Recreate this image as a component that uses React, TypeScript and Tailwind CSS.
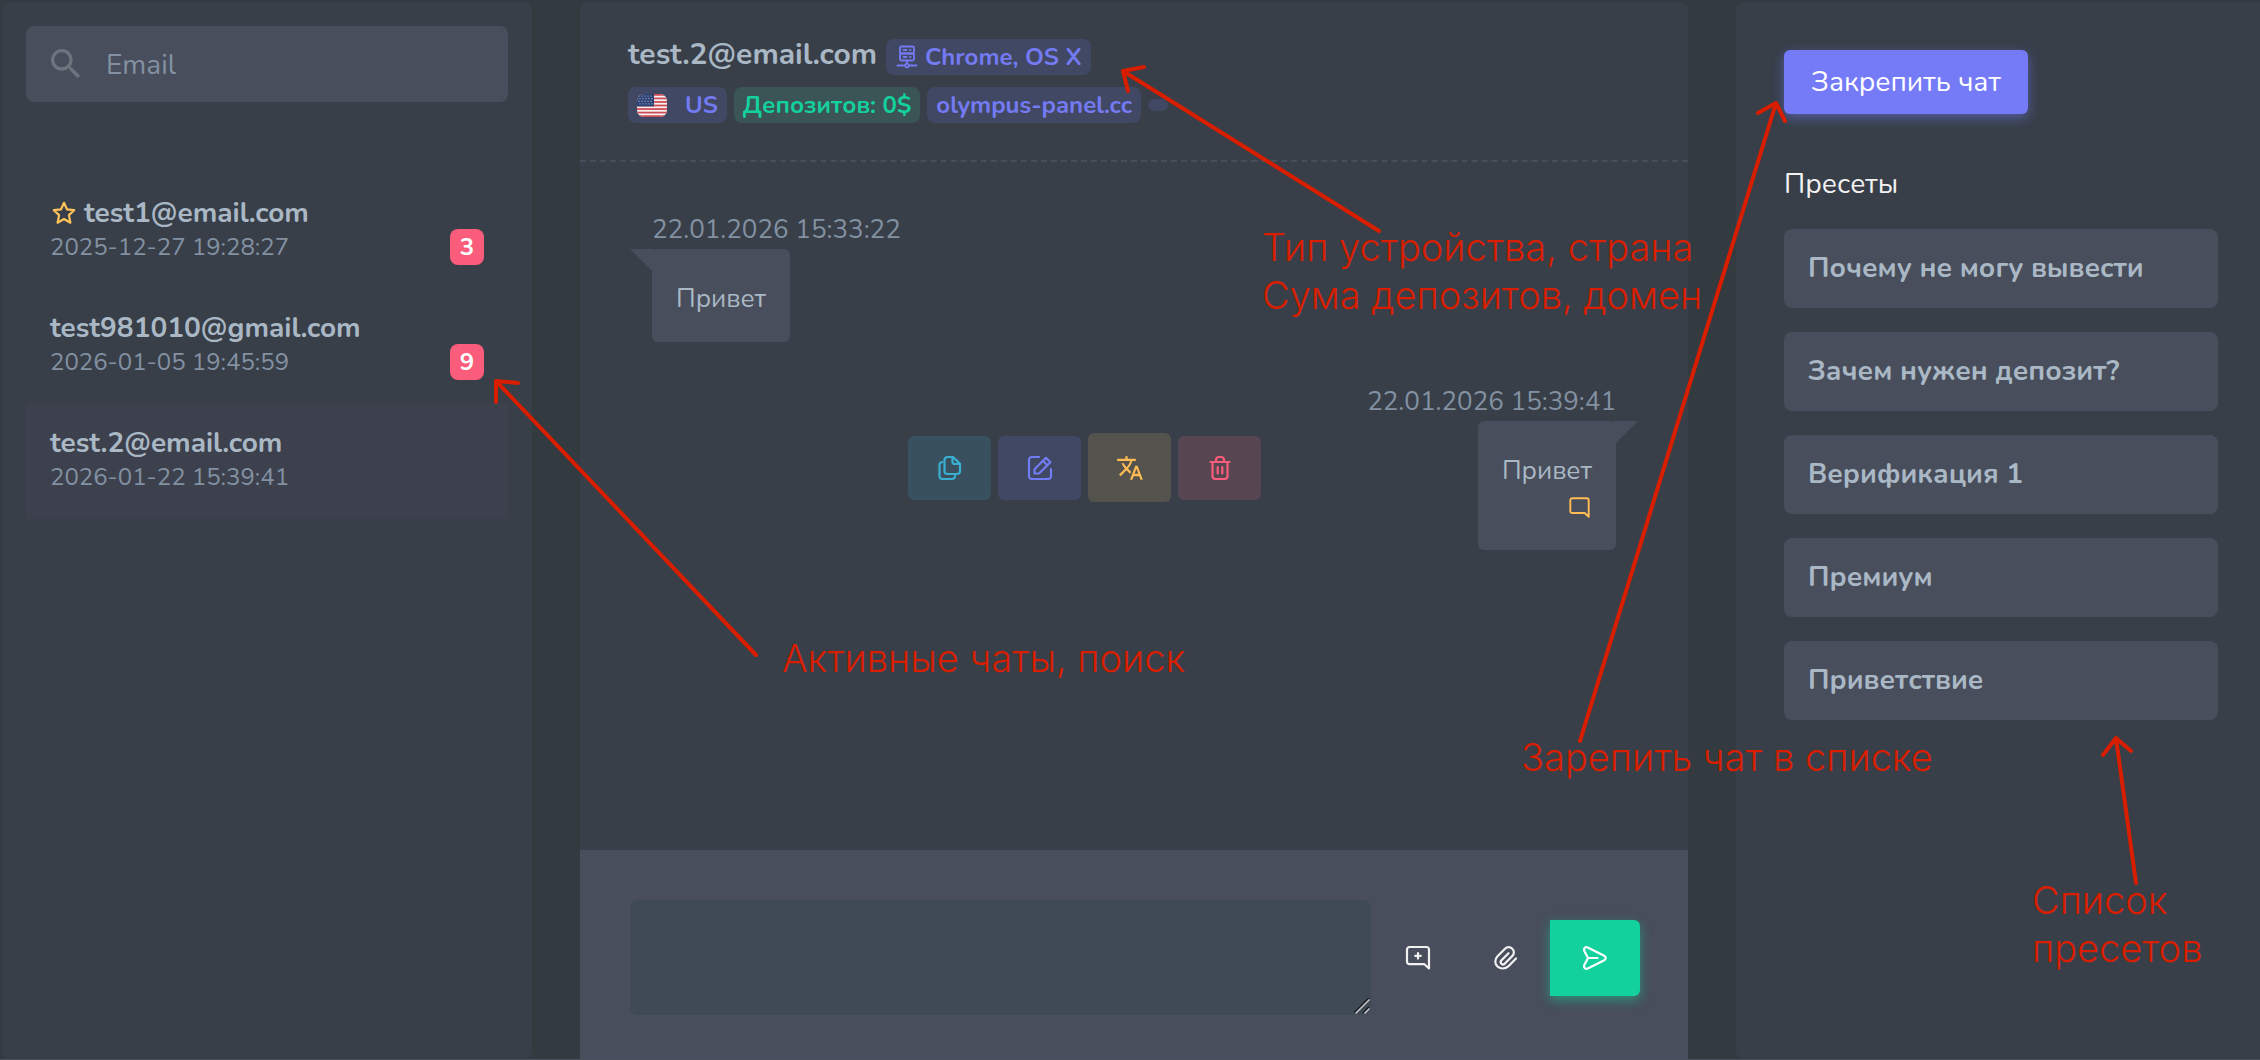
import { useState } from "react";
import type { ReactNode } from "react";
import { MdSearch, MdTranslate } from "react-icons/md";

interface Chat {
  email: string;
  date: string;
  unread?: number;
  starred?: boolean;
}

const CHATS: Chat[] = [
  { email: "test1@email.com", date: "2025-12-27 19:28:27", unread: 3, starred: true },
  { email: "test981010@gmail.com", date: "2026-01-05 19:45:59", unread: 9 },
  { email: "test.2@email.com", date: "2026-01-22 15:39:41" },
];

const SELECTED = "test.2@email.com";

const PRESETS = [
  "Почему не могу вывести",
  "Зачем нужен депозит?",
  "Верификация 1",
  "Премиум",
  "Приветствие",
];

function Icon({ className = "size-6", width = 2.2, children }: { className?: string; width?: number; children: ReactNode }) {
  return (
    <svg
      className={className}
      viewBox="0 0 24 24"
      fill="none"
      stroke="currentColor"
      strokeWidth={width}
      strokeLinecap="round"
      strokeLinejoin="round"
      overflow="visible"
      aria-hidden="true"
    >
      {children}
    </svg>
  );
}

const StarIcon = () => (
  <Icon className="ml-0.5 size-6 shrink-0 text-[#ffc35a]">
    <path d="M12 1.8l3 6.6 7.2.8-5.3 4.9 1.5 7.6L12 18l-6.4 3.7 1.5-7.6L1.8 9.2 9 8.4z" />
  </Icon>
);

const ServerIcon = () => (
  <Icon width={1.8}>
    <rect x="5" y="1.5" width="14" height="7" rx="1.5" />
    <rect x="5" y="8.5" width="14" height="7" rx="1.5" />
    <circle cx="12" cy="20.5" r="1.8" />
    <path d="M12 15.5v3M2.5 20.5H10M14 20.5h7.5M8.5 5h3M15 5h.5M8.5 12h3M15 12h.5" />
  </Icon>
);

const CopyIcon = () => (
  <Icon>
    <path d="M9.5 1h5.6L22 7.9V15a3 3 0 0 1-3 3H9.5a3 3 0 0 1-3-3V4a3 3 0 0 1 3-3z" />
    <path d="M14.5 1.5V6a2 2 0 0 0 2 2H21M4.5 6a3 3 0 0 0-3 3v11a3 3 0 0 0 3 3H14a3 3 0 0 0 3-3" />
  </Icon>
);

const EditIcon = () => (
  <Icon>
    <path d="M11 1H4a3 3 0 0 0-3 3v16a3 3 0 0 0 3 3h16a3 3 0 0 0 3-3v-7" />
    <path d="M6.5 17.5v-4.2L18 1.8l4.4 4.4L11 17.5zM15 4.8l4.3 4.4" />
  </Icon>
);

const TrashIcon = () => (
  <Icon>
    <path d="M2.5 6h19M4.5 6v14a3 3 0 0 0 3 3h9a3 3 0 0 0 3-3V6M8 5.5V4a3 3 0 0 1 3-3h2a3 3 0 0 1 3 3v1.5M9.7 11v6.5M14.3 11v6.5" />
  </Icon>
);

const SendIcon = () => (
  <Icon>
    <path d="M5 12h9.5M5 12 1.2 4.7C.3 2.4 2.5.5 4.7 1.400l16.500 8.400c2 1 2 3.400 0 4.400L4.700 22.600c-2.200.9-4.400-1-3.500-3.300z" />
  </Icon>
);

const ClipIcon = () => (
  <Icon>
    <path d="M22 12.5l-7.8 7.9a8 8 0 0 1-10.5.3 7 7 0 0 1-.4-10.200l7.700-7.800a5 5 0 0 1 7.300 0 5 5 0 0 1 .1 7.200l-7.700 7.800a2.300 2.300 0 0 1-3.300-3.300L14.500 7.200" />
  </Icon>
);

const MessagePlusIcon = () => (
  <Icon>
    <path d="M23 22.5l-4.600-4.300H3.500A2.500 2.500 0 0 1 1 15.700V3.500A2.500 2.500 0 0 1 3.500 1h17A2.500 2.500 0 0 1 23 3.500z" />
    <path d="M12 7v5.6M9.2 9.800h5.600" />
  </Icon>
);

function Flag() {
  return (
    <svg className="h-[23px] w-[30px]" viewBox="0 0 30 23" aria-hidden="true">
      <clipPath id="flag">
        <rect width="30" height="23" rx="7" />
      </clipPath>
      <g clipPath="url(#flag)">
        <rect width="30" height="23" fill="#f4f1f1" />
        {[0, 1, 2, 3, 4, 5, 6].map((i) => (
          <rect key={i} y={i * 3.54} width="30" height="1.77" fill="#cf4a55" />
        ))}
        <rect width="17" height="12.4" fill="#2c4274" />
        {[2, 4.6, 7.2, 9.8].map((y, row) =>
          [2, 5, 8, 11, 14].map((x) => (
            <circle key={`${x}-${y}`} cx={x + (row % 2)} cy={y} r=".6" fill="#c3cbdc" />
          )),
        )}
      </g>
    </svg>
  );
}

function Tag({ tone = "indigo", children }: { tone?: "indigo" | "green"; children?: ReactNode }) {
  const tones = {
    indigo: "bg-[#414863] text-[#747af2]",
    green: "bg-[#3b5557] text-[#13d19d]",
  };
  return (
    <span className={`flex h-9 items-center gap-1.5 rounded-lg px-[9px] text-[24px] font-bold ${tones[tone]}`}>
      {children}
    </span>
  );
}

function Sidebar() {
  return (
    <aside className="rounded-lg bg-[#383f49] p-6">
      <label className="flex h-19 items-center gap-5 rounded-lg bg-[#484e5b] px-5">
        <MdSearch className="size-10 shrink-0 text-[#6c757d]" />
        <input
          type="search"
          aria-label="Email"
          placeholder="Email"
          className="w-full bg-transparent pt-0.5 text-[28px] outline-none placeholder:text-[#8391a2]"
        />
      </label>
      <ul className="mt-18">
        {CHATS.map((chat) => (
          <li key={chat.email}>
            <a
              href={`#${chat.email}`}
              className={`flex h-[115px] items-start justify-between px-6 pt-[21px] ${chat.email === SELECTED ? "bg-[#3c414d]" : ""}`}
            >
              <span>
                <span className="flex items-center gap-2 text-[28px] leading-9 font-bold text-[#aab8c5]">
                  {chat.starred && <StarIcon />}
                  {chat.email}
                </span>
                <span className="block text-[24px] leading-8 text-[#8391a2]">{chat.date}</span>
              </span>
              {chat.unread && (
                <span className="mt-[34px] flex h-9 w-[34px] items-center justify-center rounded-lg bg-[#fa5c7c] text-[24px] font-bold text-white">
                  {chat.unread}
                </span>
              )}
            </a>
          </li>
        ))}
      </ul>
    </aside>
  );
}

const ACTION = "flex h-16 w-[83px] items-center justify-center rounded-md";

function Conversation() {
  const [text, setText] = useState("");

  return (
    <main className="col-span-2 flex flex-col overflow-hidden rounded-t-lg bg-[#383f49]">
      <header className="flex h-40 flex-col gap-3 border-b-2 border-dashed border-[#484e5b] px-12 pt-[37px]">
        <div className="flex items-center gap-[9px]">
          <h1 className="pb-1 text-[30px] leading-8 font-bold text-[#aab8c5]">{SELECTED}</h1>
          <Tag>
            <ServerIcon />
            Chrome, OS X
          </Tag>
        </div>
        <div className="flex items-center gap-[7px]">
          <Tag>
            <Flag />
            <span className="ml-3">US</span>
          </Tag>
          <Tag tone="green">Депозитов: 0$</Tag>
          <Tag>olympus-panel.cc</Tag>
          <span className="h-3 w-5 rounded-md bg-[#414863]" />
        </div>
      </header>

      <div className="flex flex-1 flex-col px-18 pt-[50px]">
        <article className="flex flex-col items-start">
          <time className="text-[26px] leading-9 text-[#8391a2]">22.01.2026 15:33:22</time>
          <div className="relative mt-px rounded-md bg-[#484e5b] px-6 pt-8 pb-[25px] text-[26px] leading-9 text-[#aab8c5]">
            <svg className="absolute top-0 -left-[22px] size-6" viewBox="0 0 24 24" aria-hidden="true">
              <path d="M0 0h24v24z" fill="#484e5b" />
            </svg>
            Привет
          </div>
        </article>

        <article className="mt-[42px] flex flex-col items-end">
          <time className="text-[26px] leading-9 text-[#8391a2]">22.01.2026 15:39:41</time>
          <div className="mt-px flex w-full items-start justify-end">
            <div className="mt-3 mr-auto ml-64 flex items-center gap-[7px]">
              <button aria-label="Копировать" className={`${ACTION} bg-[#39505f] text-[#39afd1]`}>
                <CopyIcon />
              </button>
              <button aria-label="Изменить" className={`${ACTION} bg-[#414863] text-[#727cf5]`}>
                <EditIcon />
              </button>
              <button aria-label="Перевести" className="flex h-[69px] w-[83px] items-center justify-center rounded-md bg-[#55534d] text-[#ffbc55]">
                <MdTranslate className="size-7" />
              </button>
              <button aria-label="Удалить" className={`${ACTION} bg-[#574651] text-[#fa5c7c]`}>
                <TrashIcon />
              </button>
            </div>
            <div className="relative flex flex-col items-end rounded-md bg-[#484e5b] px-6 pt-8 pb-8 text-[26px] leading-9 text-[#aab8c5]">
              <svg className="absolute top-0 -right-[22px] size-6" viewBox="0 0 24 24" aria-hidden="true">
                <path d="M0 0h24L0 24z" fill="#484e5b" />
              </svg>
              Привет
              <Icon className="mt-2 mr-0.5 size-[21px] text-[#ffbc55]">
                <path d="M22.5 22.5l-4.6-4.300H3.500A2 2 0 0 1 1.500 16V3.500a2 2 0 0 1 2-2h17a2 2 0 0 1 2 2z" />
              </Icon>
            </div>
          </div>
        </article>
      </div>

      <form className="flex items-center bg-[#484e5b] px-12 pt-[50px] pb-11" onSubmit={(e) => e.preventDefault()}>
        <div className="relative ml-0.5 flex min-w-0 flex-1">
          <textarea
            aria-label="Сообщение"
            value={text}
            onChange={(e) => setText(e.target.value)}
            className="h-[115px] w-full rounded-lg bg-[#404a54] p-4 text-[26px] text-[#aab8c5] outline-none [&::-webkit-resizer]:hidden"
          />
          <svg className="pointer-events-none absolute right-px bottom-px size-4" viewBox="0 0 16 16" aria-hidden="true">
            <path d="M0 15 15 0M9 15l6-6" stroke="#14171d" strokeWidth="1.5" />
            <path d="M1.5 15.5l14-14M10.5 15.5l5-5" stroke="#c9c9cb" strokeWidth="1.5" />
          </svg>
        </div>
        <button type="button" aria-label="Шаблон" className="flex h-19 w-[94px] items-center justify-center text-[#f1f1f1]">
          <MessagePlusIcon />
        </button>
        <button type="button" aria-label="Файл" className="flex h-19 w-[85px] items-center justify-center pr-1 text-[#f1f1f1]">
          <ClipIcon />
        </button>
        <button
          type="submit"
          aria-label="Отправить"
          className="flex h-19 w-[90px] items-center justify-center rounded-r-md bg-[#13d19d] text-white shadow-[0_4px_12px_0_#13d19d80]"
        >
          <SendIcon />
        </button>
      </form>
    </main>
  );
}

function Presets() {
  return (
    <aside className="rounded-lg bg-[#383f49] px-12 pt-12">
      <button className="h-16 rounded-md bg-[#757bf6] px-[27px] text-[28px] text-white shadow-[0_4px_12px_0_#727cf580]">
        Закрепить чат
      </button>
      <h2 className="mt-[50px] text-[28px] leading-10 text-[#f1f1f1]">Пресеты</h2>
      <ul className="mt-[25px] flex flex-col gap-6">
        {PRESETS.map((preset) => (
          <li key={preset} className="flex">
            <button className="h-[79px] w-full rounded-lg bg-[#484e5b] px-6 pb-0.5 text-left text-[28px] font-bold text-[#aab8c5]">
              {preset}
            </button>
          </li>
        ))}
      </ul>
    </aside>
  );
}

const NOTE = "absolute font-['Inter',sans-serif] text-[38px] leading-12 font-light whitespace-nowrap";

/* Hand-placed notes and arrows over the panel */
function Annotations() {
  return (
    <div className="pointer-events-none absolute inset-0 text-[#d91e00]">
      <svg className="absolute top-0 left-0" width="2260" height="1060" viewBox="0 0 2260 1060" aria-hidden="true">
        <g fill="none" stroke="currentColor" strokeWidth="4" strokeLinecap="round" strokeLinejoin="round">
          <path d="M1379 231 1123 71M1144 67 1123 71 1128 91" />
          <path d="M756 655 496 381M518 383 496 381 496 402" />
          <path d="M1580 741 1776 103M1758 113 1776 103 1785 121" />
          <path d="M2136 883 2116 738M2103 755 2116 738 2131 751" />
        </g>
      </svg>
      <p className={`${NOTE} top-[223px] left-[1262px]`}>
        Тип устройства, страна
        <br />
        Сума депозитов, домен
      </p>
      <p className={`${NOTE} top-[634px] left-[782px]`}>Активные чаты, поиск</p>
      <p className={`${NOTE} top-[733px] left-[1521px]`}>Зарепить чат в списке</p>
      <p className={`${NOTE} top-[876px] left-[2032px]`}>
        Список
        <br />
        пресетов
      </p>
    </div>
  );
}

export default function App() {
  return (
    <div className="relative flex min-h-screen flex-col overflow-hidden border-b border-[#4b515b] bg-[#333a40] font-['Nunito','Noto_Sans',sans-serif]">
      <div className="-mr-1.5 grid flex-1 grid-cols-4 gap-12 pt-0.5 pl-0.5">
        <Sidebar />
        <Conversation />
        <Presets />
      </div>
      <Annotations />
    </div>
  );
}
